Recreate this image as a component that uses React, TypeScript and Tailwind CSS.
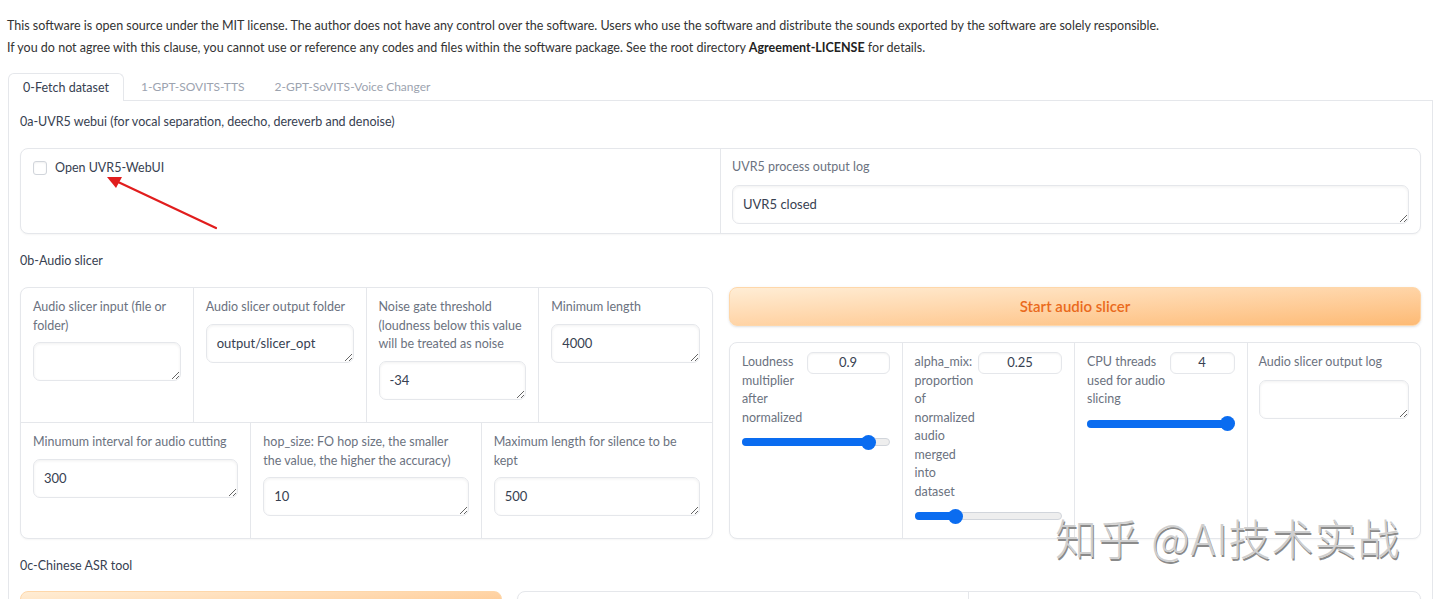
import type { ReactNode } from 'react'

const areaCls =
  'block h-[39px] w-full resize rounded-[7px] border border-[#e5e7eb] bg-white px-[10px] py-[8px] text-[13px] leading-[20px] text-[#374151] shadow-[inset_0_1px_3px_rgba(0,0,0,0.06)] outline-none'

function Area({ value = '' }: { value?: string }) {
  return <textarea readOnly defaultValue={value} className={areaCls} />
}

function Label({ children }: { children: ReactNode }) {
  return <span className="block text-[12.5px] leading-[18.5px] text-[#6b7280]">{children}</span>
}

function Field({ label, value, className = '' }: { label: ReactNode; value?: string; className?: string }) {
  return (
    <div className={`flex flex-col gap-[7px] px-[12px] pt-[10px] ${className}`}>
      <Label>{label}</Label>
      <Area value={value} />
    </div>
  )
}

function Slider({ pct }: { pct: number }) {
  return (
    <div className="relative h-[16px] w-full">
      <div className="absolute inset-x-0 top-[4px] h-[8px] rounded-full border border-[#d1d5db] bg-[#eeeeee]" />
      <div
        className="absolute left-0 top-[4px] h-[8px] rounded-full bg-[#0a6cf0]"
        style={{ width: `calc(${pct} * (100% - 15px) + 7.5px)` }}
      />
      <div
        className="absolute top-[0.5px] h-[15px] w-[15px] rounded-full bg-[#0a6cf0]"
        style={{ left: `calc(${pct} * (100% - 15px))` }}
      />
    </div>
  )
}

function SliderField({
  label,
  value,
  pct,
  labelW,
  inputW,
}: {
  label: string
  value: string
  pct: number
  labelW: string
  inputW: string
}) {
  return (
    <div className="flex flex-col border-r border-[#e5e7eb] px-[12px] pt-[10px]">
      <div className="flex items-start justify-between">
        <div className={labelW}>
          <Label>{label}</Label>
        </div>
        <div
          className={`-mt-[1px] flex h-[22px] items-center justify-center rounded-[6px] border border-[#e5e7eb] text-[13px] text-[#374151] shadow-[inset_0_1px_2px_rgba(0,0,0,0.05)] ${inputW}`}
        >
          {value}
        </div>
      </div>
      <div className="mt-[7px]">
        <Slider pct={pct} />
      </div>
    </div>
  )
}

function Section({ children }: { children: ReactNode }) {
  return <div className="text-[12.5px] leading-[18px] text-[#374151]">{children}</div>
}

const boxCls = 'rounded-[8px] border border-[#e5e7eb] bg-white shadow-[0_1px_2px_rgba(0,0,0,0.04)]'

export default function App() {
  return (
    <div className="relative min-h-[599px] overflow-hidden bg-white font-[Lato,'Noto_Sans_CJK_SC',sans-serif] text-[#374151]">
      <div className="px-[7px] pt-[15px] text-[12.5px] leading-[22px] text-[#333333]">
        <p>
          This software is open source under the MIT license. The author does not have any control over the software.
          Users who use the software and distribute the sounds exported by the software are solely responsible.
        </p>
        <p>
          If you do not agree with this clause, you cannot use or reference any codes and files within the software
          package. See the root directory <b className="font-bold text-[#222]">Agreement-LICENSE</b> for details.
        </p>
      </div>

      <div className="ml-[8px] mr-[7px] mt-[14px]">
        <div className="flex h-[28px] items-stretch">
          <div className="flex w-[116px] items-center justify-center rounded-t-[6px] border border-b-0 border-[#e5e7eb] bg-white pt-[1px] text-[12.5px] text-[#374151]">
            0-Fetch dataset
          </div>
          <div className="flex flex-1 items-center border-b border-[#e5e7eb] pl-[1px] pt-[1px] text-[12px] text-[#9ca3af]">
            <span className="px-[16px]">1-GPT-SOVITS-TTS</span>
            <span className="px-[14px]">2-GPT-SoVITS-Voice Changer</span>
          </div>
        </div>

        <div className="border border-t-0 border-[#e5e7eb] px-[11px] pb-[20px] pt-[12px]">
          <Section>0a-UVR5 webui (for vocal separation, deecho, dereverb and denoise)</Section>

          <div className={`mt-[17px] flex h-[86px] ${boxCls}`}>
            <div className="w-[700px] border-r border-[#e5e7eb] px-[12px] pt-[12px]">
              <label className="flex items-center gap-[8px] text-[12.5px] leading-[14px] text-[#374151]">
                <span className="block h-[14px] w-[14px] rounded-[3px] border border-[#d1d5db] bg-white shadow-[inset_0_1px_2px_rgba(0,0,0,0.06)]" />
                Open UVR5-WebUI
              </label>
            </div>
            <div className="flex flex-1 flex-col gap-[8px] px-[11px] pt-[9px]">
              <Label>UVR5 process output log</Label>
              <Area value="UVR5 closed" />
            </div>
          </div>

          <div className="mt-[18px]">
            <Section>0b-Audio slicer</Section>
          </div>

          <div className="mt-[17px] flex gap-[16px]">
            <div className={`flex h-[252px] w-[693px] flex-col overflow-hidden ${boxCls}`}>
              <div className="grid h-[135px] grid-cols-4 border-b border-[#e5e7eb]">
                <Field className="border-r border-[#e5e7eb]" label="Audio slicer input (file or folder)" />
                <Field className="border-r border-[#e5e7eb]" label="Audio slicer output folder" value="output/slicer_opt" />
                <Field
                  className="border-r border-[#e5e7eb]"
                  label="Noise gate threshold (loudness below this value will be treated as noise"
                  value="-34"
                />
                <Field label="Minimum length" value="4000" />
              </div>
              <div className="grid flex-1 grid-cols-3">
                <Field className="border-r border-[#e5e7eb]" label="Minumum interval for audio cutting" value="300" />
                <Field
                  className="border-r border-[#e5e7eb]"
                  label="hop_size: FO hop size, the smaller the value, the higher the accuracy)"
                  value="10"
                />
                <Field label="Maximum length for silence to be kept" value="500" />
              </div>
            </div>

            <div className="flex w-[692px] flex-col gap-[16px]">
              <button className="h-[39px] w-full rounded-[8px] border border-[#fed7aa] bg-linear-to-br from-[#ffedd5] to-[#fdba74] text-[15px] font-semibold text-[#ea6a1c] shadow-sm">
                Start audio slicer
              </button>
              <div className={`grid h-[197px] grid-cols-4 overflow-hidden ${boxCls}`}>
                <SliderField
                  label="Loudness multiplier after normalized"
                  value="0.9"
                  pct={0.9}
                  labelW="w-[62px]"
                  inputW="w-[83px]"
                />
                <SliderField
                  label="alpha_mix: proportion of normalized audio merged into dataset"
                  value="0.25"
                  pct={0.25}
                  labelW="w-[62px]"
                  inputW="w-[84px]"
                />
                <SliderField
                  label="CPU threads used for audio slicing"
                  value="4"
                  pct={1}
                  labelW="w-[80px]"
                  inputW="w-[65px]"
                />
                <div className="flex flex-col gap-[8px] px-[11px] pt-[10px]">
                  <Label>Audio slicer output log</Label>
                  <Area />
                </div>
              </div>
            </div>
          </div>

          <div className="mt-[18px]">
            <Section>0c-Chinese ASR tool</Section>
          </div>

          <div className="mt-[16px] flex gap-[15px]">
            <div className="h-[39px] w-[482px] rounded-[8px] border border-[#fed7aa] bg-linear-to-br from-[#ffedd5] to-[#fdba74]" />
            <div className={`grid h-[120px] flex-1 grid-cols-2 ${boxCls}`}>
              <div className="border-r border-[#e5e7eb]" />
              <div />
            </div>
          </div>
        </div>
      </div>

      <svg className="absolute left-[100px] top-[170px]" width="125" height="65" viewBox="0 0 125 65">
        <line x1="116" y1="58" x2="16" y2="11" stroke="#e11d1d" strokeWidth="2.2" strokeLinecap="round" />
        <polygon points="7,7 22,7 16,18" fill="#e11d1d" />
      </svg>

      <div className="absolute left-[1055px] top-[512px] font-['Noto_Sans_CJK_SC',sans-serif] text-[42px] font-light leading-[50px] tracking-[1px] text-[#cfcfcf] [text-shadow:1px_2px_0_#8a8a8a]">
        知乎 @AI技术实战
      </div>
    </div>
  )
}
